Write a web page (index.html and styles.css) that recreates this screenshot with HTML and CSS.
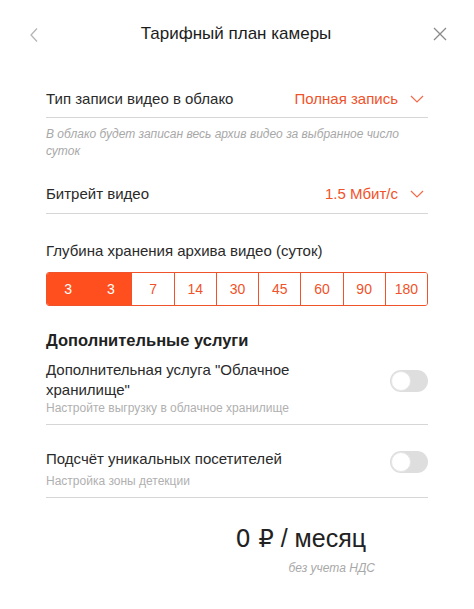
FILE: index.html
```html
<!DOCTYPE html>
<html lang="ru">
<head>
<meta charset="utf-8">
<link rel="stylesheet" href="styles.css">
</head>
<body>
<div class="page">
  <header class="header">
    <svg class="back" width="10" height="16" viewBox="0 0 10 16"><path d="M8 1.5 L2 8 L8 14.5" fill="none" stroke="#b5b5b5" stroke-width="1.3"/></svg>
    <h1 class="title">Тарифный план камеры</h1>
    <svg class="close" width="14" height="14" viewBox="0 0 14 14"><path d="M1 1 L13 13 M13 1 L1 13" fill="none" stroke="#8a8a8a" stroke-width="1.3"/></svg>
  </header>

  <div class="content">
    <div class="select-row">
      <span class="label">Тип записи видео в облако</span>
      <span class="value">Полная запись
        <svg class="chev" width="14" height="8" viewBox="0 0 14 8"><path d="M1 1 L7 7 L13 1" fill="none" stroke="#f36a4a" stroke-width="1.2"/></svg>
      </span>
    </div>
    <p class="hint">В облако будет записан весь архив видео за выбранное число суток</p>

    <div class="select-row second">
      <span class="label">Битрейт видео</span>
      <span class="value">1.5 Мбит/с
        <svg class="chev" width="14" height="8" viewBox="0 0 14 8"><path d="M1 1 L7 7 L13 1" fill="none" stroke="#f36a4a" stroke-width="1.2"/></svg>
      </span>
    </div>

    <div class="depth-label">Глубина хранения архива видео (суток)</div>
    <div class="segments">
      <span class="seg active">3</span>
      <span class="seg active">3</span>
      <span class="seg">7</span>
      <span class="seg">14</span>
      <span class="seg">30</span>
      <span class="seg">45</span>
      <span class="seg">60</span>
      <span class="seg">90</span>
      <span class="seg">180</span>
    </div>

    <h2 class="section">Дополнительные услуги</h2>

    <div class="service">
      <div class="service-text">
        <div class="service-title">Дополнительная услуга "Облачное хранилище"</div>
        <div class="service-hint">Настройте выгрузку в облачное хранилище</div>
      </div>
      <span class="toggle"><span class="knob"></span></span>
    </div>

    <div class="service">
      <div class="service-text">
        <div class="service-title">Подсчёт уникальных посетителей</div>
        <div class="service-hint">Настройка зоны детекции</div>
      </div>
      <span class="toggle"><span class="knob"></span></span>
    </div>

    <div class="price-block">
      <div class="price"><span class="num">0 ₽</span> / месяц</div>
      <div class="vat">без учета НДС</div>
    </div>
  </div>
</div>
</body>
</html>
```

FILE: styles.css
```css
* { box-sizing: border-box; }
html, body { margin: 0; padding: 0; background: #fff; }
body {
  font-family: "Liberation Sans", Arial, sans-serif;
  color: #222;
  width: 474px;
}
.page { width: 474px; }
.header {
  height: 68px;
  display: flex;
  align-items: center;
  justify-content: space-between;
  padding: 0 27px 0 29px;
}
.back { margin-top: 2px; }
.title {
  margin: 0;
  font-size: 17px;
  font-weight: normal;
  color: #1c1c1c;
}
.content { padding: 0 46px; }
.select-row {
  display: flex;
  justify-content: space-between;
  align-items: center;
  height: 50px;
  border-bottom: 1px solid #d6d6d6;
  padding-top: 12px;
}
.select-row.second { height: 52px; padding-top: 12px; }
.label { font-size: 15px; color: #2a2a2a; }
.value {
  font-size: 15px;
  color: #f0522a;
  display: flex;
  align-items: center;
}
.chev { margin-left: 12px; margin-right: 4px; }
.hint {
  margin: 8px 0 2px;
  font-size: 12px;
  font-style: italic;
  line-height: 17px;
  color: #a8a8a8;
}
.depth-label {
  margin-top: 28px;
  font-size: 15px;
  color: #2a2a2a;
}
.segments {
  display: grid;
  grid-template-columns: repeat(9, 1fr);
  margin-top: 13px;
  height: 34px;
  border: 1px solid #f0522a;
  border-radius: 3px;
  overflow: hidden;
}
.seg {
  display: flex;
  align-items: center;
  justify-content: center;
  font-size: 14px;
  color: #f0522a;
  border-left: 1px solid #f0522a;
  background: #fff;
}
.seg:first-child { border-left: none; }
.seg.active { background: #ff4f1e; color: #fff; border-left-color: #ff4f1e; }
.section {
  margin: 25px 0 0;
  font-size: 16.5px;
  font-weight: bold;
  color: #222;
}
.service {
  display: flex;
  align-items: center;
  justify-content: space-between;
  border-bottom: 1px solid #d6d6d6;
  padding: 10px 0 9px;
}
.service + .service { padding-top: 24px; padding-bottom: 9px; }
.service-text { width: 300px; }
.service-title { font-size: 15px; line-height: 20px; color: #2a2a2a; }
.service-hint { font-size: 12px; color: #b0b0b0; margin-top: 1px; }
.service + .service .service-hint { margin-top: 5px; }
.toggle {
  position: relative;
  width: 38px;
  height: 22px;
  border-radius: 11px;
  background: #dedede;
  margin-top: -14px;
}
.knob {
  position: absolute;
  left: 1px;
  top: 1px;
  width: 20px;
  height: 20px;
  border-radius: 50%;
  background: #fff;
  border: 1px solid #e6e6e6;
}
.price-block {
  display: flex;
  flex-direction: column;
  align-items: flex-end;
  padding-right: 62px;
  margin-top: 26px;
}
.price { font-size: 25px; color: #222; }
.price .num { font-family: "DejaVu Sans", sans-serif; font-size: 24px; }
.vat {
  margin-top: 8px;
  font-size: 12px;
  font-style: italic;
  color: #a8a8a8;
  margin-right: -9px;
}
```
